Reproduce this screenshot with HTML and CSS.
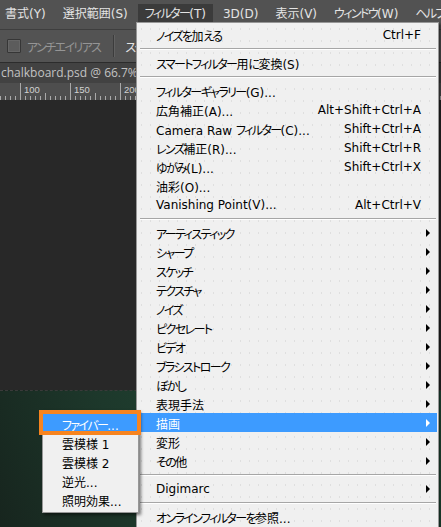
FILE: index.html
```html
<!DOCTYPE html>
<html lang="ja">
<head>
<meta charset="utf-8">
<title>Filter menu</title>
<link rel="stylesheet" href="styles.css">
</head>
<body>
<div class="app">
  <div class="menubar">
    <span class="mb-item">書式(Y)</span>
    <span class="mb-item">選択範囲(S)</span>
    <span class="mb-item active"><span class="k">フィルター</span>(T)</span>
    <span class="mb-item">3D(D)</span>
    <span class="mb-item">表示(V)</span>
    <span class="mb-item"><span class="k">ウィンドウ</span>(W)</span>
    <span class="mb-item"><span class="k">ヘルプ</span>(H)</span>
  </div>
  <div class="options">
    <span class="checkbox"></span>
    <span class="opt-label k">アンチエイリアス</span>
    <span class="opt-sep"></span>
    <span class="opt-text k">スタイル</span>
  </div>
  <div class="doctab">chalkboard.psd @ 66.7%</div>
  <div class="ruler">
    <svg class="ruler-svg" width="441" height="17" viewBox="0 0 441 17">
      <defs>
        <pattern id="minor" width="5" height="17" patternUnits="userSpaceOnUse">
          <rect x="0" y="13" width="1" height="4" fill="#a9a9a9"/>
        </pattern>
      </defs>
      <rect width="441" height="17" fill="url(#minor)"/>
      <rect x="45" y="10" width="1" height="7" fill="#a9a9a9"/>
      <rect x="95" y="10" width="1" height="7" fill="#a9a9a9"/>
      <rect x="20" y="0" width="1" height="17" fill="#a9a9a9"/>
      <rect x="70" y="0" width="1" height="17" fill="#a9a9a9"/>
      <rect x="120" y="0" width="1" height="17" fill="#a9a9a9"/>
      <text class="ruler-num" x="24" y="10">100</text>
      <text class="ruler-num" x="74" y="10">150</text>
      <text class="ruler-num" x="124" y="10">200</text>
    </svg>
  </div>
  <div class="canvas"></div>
  <div class="board"></div>
</div>

<div class="menu">
  <div class="row"><span class="label"><span class="k">ノイズを</span>加<span class="k">える</span></span><span class="key">Ctrl+F</span></div>
  <div class="sep"></div>
  <div class="row"><span class="label"><span class="k">スマートフィルター</span>用<span class="k">に</span>変換(S)</span></div>
  <div class="sep"></div>
  <div class="row"><span class="label"><span class="k">フィルターギャラリー</span>(G)...</span></div>
  <div class="row"><span class="label">広角補正(A)...</span><span class="key">Alt+Shift+Ctrl+A</span></div>
  <div class="row"><span class="label">Camera Raw <span class="k">フィルター</span>(C)...</span><span class="key">Shift+Ctrl+A</span></div>
  <div class="row"><span class="label"><span class="k">レンズ</span>補正(R)...</span><span class="key">Shift+Ctrl+R</span></div>
  <div class="row"><span class="label"><span class="k">ゆがみ</span>(L)...</span><span class="key">Shift+Ctrl+X</span></div>
  <div class="row"><span class="label">油彩(O)...</span></div>
  <div class="row"><span class="label">Vanishing Point(V)...</span><span class="key">Alt+Ctrl+V</span></div>
  <div class="sep"></div>
  <div class="row sub"><span class="label k">アーティスティック</span><span class="arrow"></span></div>
  <div class="row sub"><span class="label k">シャープ</span><span class="arrow"></span></div>
  <div class="row sub"><span class="label k">スケッチ</span><span class="arrow"></span></div>
  <div class="row sub"><span class="label k">テクスチャ</span><span class="arrow"></span></div>
  <div class="row sub"><span class="label k">ノイズ</span><span class="arrow"></span></div>
  <div class="row sub"><span class="label k">ピクセレート</span><span class="arrow"></span></div>
  <div class="row sub"><span class="label k">ビデオ</span><span class="arrow"></span></div>
  <div class="row sub"><span class="label k">ブラシストローク</span><span class="arrow"></span></div>
  <div class="row sub"><span class="label k">ぼかし</span><span class="arrow"></span></div>
  <div class="row sub"><span class="label">表現手法</span><span class="arrow"></span></div>
  <div class="row sub hl"><span class="label">描画</span><span class="arrow"></span></div>
  <div class="row sub"><span class="label">変形</span><span class="arrow"></span></div>
  <div class="row sub"><span class="label"><span class="k">その</span>他</span><span class="arrow"></span></div>
  <div class="sep"></div>
  <div class="row sub"><span class="label">Digimarc</span><span class="arrow"></span></div>
  <div class="sep"></div>
  <div class="row"><span class="label"><span class="k">オンラインフィルターを</span>参照...</span></div>
</div>

<div class="submenu">
  <div class="row hl"><span class="label"><span class="k">ファイバー</span>...</span></div>
  <div class="row"><span class="label">雲模様 1</span></div>
  <div class="row"><span class="label">雲模様 2</span></div>
  <div class="row"><span class="label">逆光...</span></div>
  <div class="row"><span class="label">照明効果...</span></div>
</div>

<div class="callout"></div>
</body>
</html>
```

FILE: styles.css
```css
* { box-sizing: border-box; }

html, body {
  margin: 0;
  padding: 0;
  width: 441px;
  height: 527px;
  overflow: hidden;
}

body {
  position: relative;
  font-family: "DejaVu Sans", "Noto Sans CJK JP", sans-serif;
  font-size: 12px;
  font-feature-settings: "palt" 1;
  background: #282828;
}

/* kana runs: tighter, like Meiryo UI's proportional kana */
.k {
  letter-spacing: -1.6px;
}

.app {
  display: flex;
  flex-direction: column;
  height: 527px;
}

/* top menu bar */
.menubar {
  height: 29px;
  flex: none;
  display: flex;
  gap: 3px;
  margin-left: -2px;
  background: #525252;
  color: #e4e4e4;
  white-space: nowrap;
}

.mb-item {
  margin-top: 4px;
  height: 21px;
  line-height: 20px;
  padding: 0 7px;
}

.mb-item.active {
  background: #3b3b3b;
}

/* options bar */
.options {
  height: 34px;
  flex: none;
  display: flex;
  align-items: center;
  padding-left: 7px;
  background: #535353;
  border-top: 1px solid #3e3e3e;
  border-bottom: 1px solid #2c2c2c;
  white-space: nowrap;
}

.checkbox {
  width: 14px;
  height: 14px;
  border: 1px solid #363636;
  border-radius: 1px;
  background: #5c5c5c;
  box-shadow: inset 0 0 0 1px #666;
}

.opt-label {
  margin-left: 6px;
  color: #959595;
}

.opt-sep {
  width: 2px;
  height: 22px;
  margin-left: 13px;
  border-left: 1px solid #3c3c3c;
  border-right: 1px solid #616161;
}

.opt-text {
  margin-left: 10px;
  color: #e4e4e4;
}

/* document tab */
.doctab {
  height: 20px;
  flex: none;
  background: #424242;
  color: #c2c2c2;
  font-family: "Open Sans", sans-serif;
  font-size: 12px;
  line-height: 20px;
  padding-left: 1px;
  white-space: nowrap;
}

.ruler {
  height: 17px;
  flex: none;
  background: #4e4e4e;
}

.ruler-svg {
  display: block;
}

.ruler-num {
  font-family: "Liberation Sans", sans-serif;
  font-size: 9.5px;
  fill: #d2d2d2;
}

.canvas {
  height: 290px;
  flex: none;
  background: #282828;
}

.board {
  flex: 1;
  border-top: 1px dashed #3a3a3a;
  background: linear-gradient(70deg, #17251e 0%, #1d382b 30%, #214634 60%, #244f3b 100%);
}

/* dropdown menu */
.menu {
  position: absolute;
  left: 136px;
  top: 22px;
  width: 303px;
  padding: 2px 1px 2px 0;
  background-color: #f0f0f0;
  background-image: radial-gradient(circle, rgba(0, 0, 0, 0.07) 0.6px, transparent 0.9px);
  background-size: 9px 12px;
  border: 1px solid #979797;
  box-shadow: 2px 2px 2px rgba(0, 0, 0, 0.45);
  color: #000;
}

.row {
  height: 19px;
  display: flex;
  align-items: center;
  padding: 0 16px 0 19px;
  white-space: nowrap;
}

.row .label {
  flex: 1;
  padding-top: 1px;
}

.row .key {
  padding-top: 1px;
}

.row.sub {
  padding-right: 7px;
}

.arrow {
  width: 0;
  height: 0;
  border-left: 4px solid #000;
  border-top: 4px solid transparent;
  border-bottom: 4px solid transparent;
}

.row.hl {
  background: #3d9bff;
  color: #fff;
}

.row.hl .arrow {
  border-left-color: #fff;
}

.sep {
  height: 9px;
  padding-top: 4px;
  margin: 0 1px 0 3px;
}

.sep::before {
  content: "";
  display: block;
  border-top: 1px solid #a6a6a6;
  border-bottom: 1px solid #fff;
}

/* submenu */
.submenu {
  position: absolute;
  left: 42px;
  top: 410px;
  width: 97px;
  padding: 3px 0;
  background: #f0f0f0;
  border: 1px solid #979797;
  box-shadow: 2px 2px 3px rgba(0, 0, 0, 0.5);
  color: #000;
}

.submenu .row {
  padding: 0 4px 0 19px;
}

/* annotation box */
.callout {
  position: absolute;
  left: 39px;
  top: 410px;
  width: 102px;
  height: 25px;
  border: 4px solid #f7841f;
}
```
